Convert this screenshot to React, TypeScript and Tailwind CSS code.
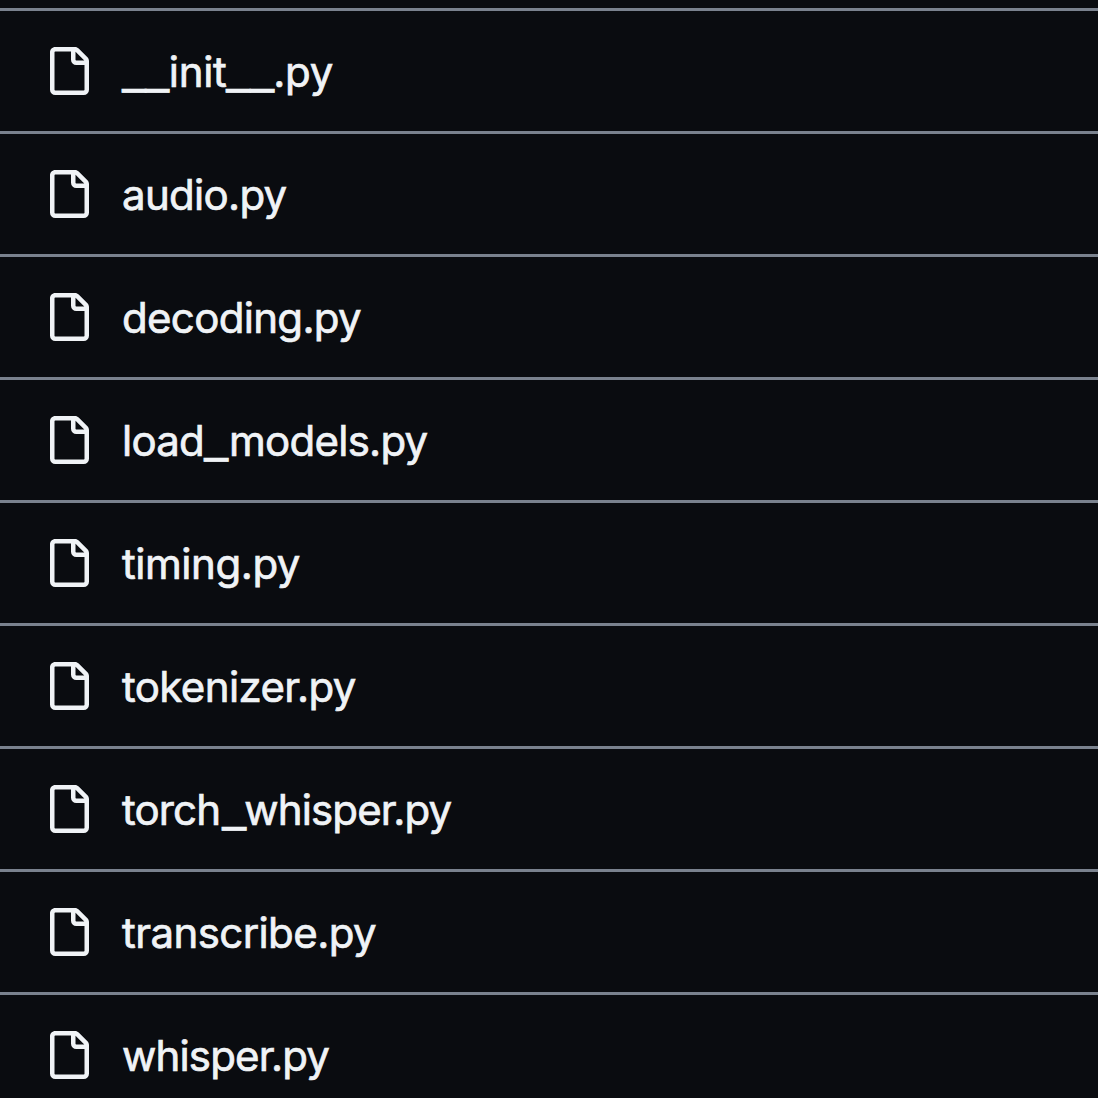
const files = [
  { name: "__init__.py", tracking: "tracking-[-0.3px]", underscore: "w-[23.4px]" },
  { name: "audio.py", tracking: "tracking-[-0.7px]", underscore: "" },
  { name: "decoding.py", tracking: "tracking-[-0.68px]", underscore: "" },
  { name: "load_models.py", tracking: "tracking-[-0.75px]", underscore: "w-[25px]" },
  { name: "timing.py", tracking: "tracking-[-0.45px]", underscore: "" },
  { name: "tokenizer.py", tracking: "tracking-[-0.6px]", underscore: "" },
  { name: "torch_whisper.py", tracking: "tracking-[-0.85px]", underscore: "ml-[1.5px] w-[22.5px]" },
  { name: "transcribe.py", tracking: "tracking-[-0.58px]", underscore: "" },
  { name: "whisper.py", tracking: "tracking-[-0.85px]", underscore: "" },
];

function FileIcon() {
  return (
    <svg viewBox="0 0 16 16" className="h-12 w-12 shrink-0 fill-[#f0f3f6]" aria-hidden="true">
      <path d="M2 1.75C2 .784 2.784 0 3.75 0h6.586c.464 0 .909.184 1.237.513l2.914 2.914c.329.328.513.773.513 1.237v9.586A1.75 1.75 0 0 1 13.25 16h-9.5A1.75 1.75 0 0 1 2 14.25Zm1.75-.25a.25.25 0 0 0-.25.25v12.5c0 .138.112.25.25.25h9.5a.25.25 0 0 0 .25-.25V6h-2.75A1.75 1.75 0 0 1 9 4.25V1.5Zm6.75.062V4.25c0 .138.112.25.25.25h2.688l-.011-.013-2.914-2.914-.013-.011Z" />
    </svg>
  );
}

// Underscores are set wider than the font's own glyph.
function FileName({ name, underscore }: { name: string; underscore: string }) {
  return (
    <>
      {name.split(/(_)/).map((part, i) =>
        part === "_" ? (
          <span key={i} className={`inline-block ${underscore}`}>
            <span className="inline-block origin-left translate-y-[1.5px] scale-x-[1.27] tracking-normal">_</span>
          </span>
        ) : (
          part
        ),
      )}
    </>
  );
}

export default function App() {
  return (
    <main className="h-[1098px] overflow-hidden bg-[#0a0c10] pt-2 font-[Inter,sans-serif] text-[#f0f3f6]">
      <ul>
        {files.map(({ name, tracking, underscore }) => (
          <li key={name} className="flex h-[123px] items-center gap-7.5 border-t-3 border-[#7a828e] pl-11">
            <FileIcon />
            <span
              className={`pt-0.5 text-[42px] leading-[60px] whitespace-nowrap [-webkit-text-stroke:0.7px_#f0f3f6] ${tracking}`}
            >
              <FileName name={name} underscore={underscore} />
            </span>
          </li>
        ))}
      </ul>
    </main>
  );
}
